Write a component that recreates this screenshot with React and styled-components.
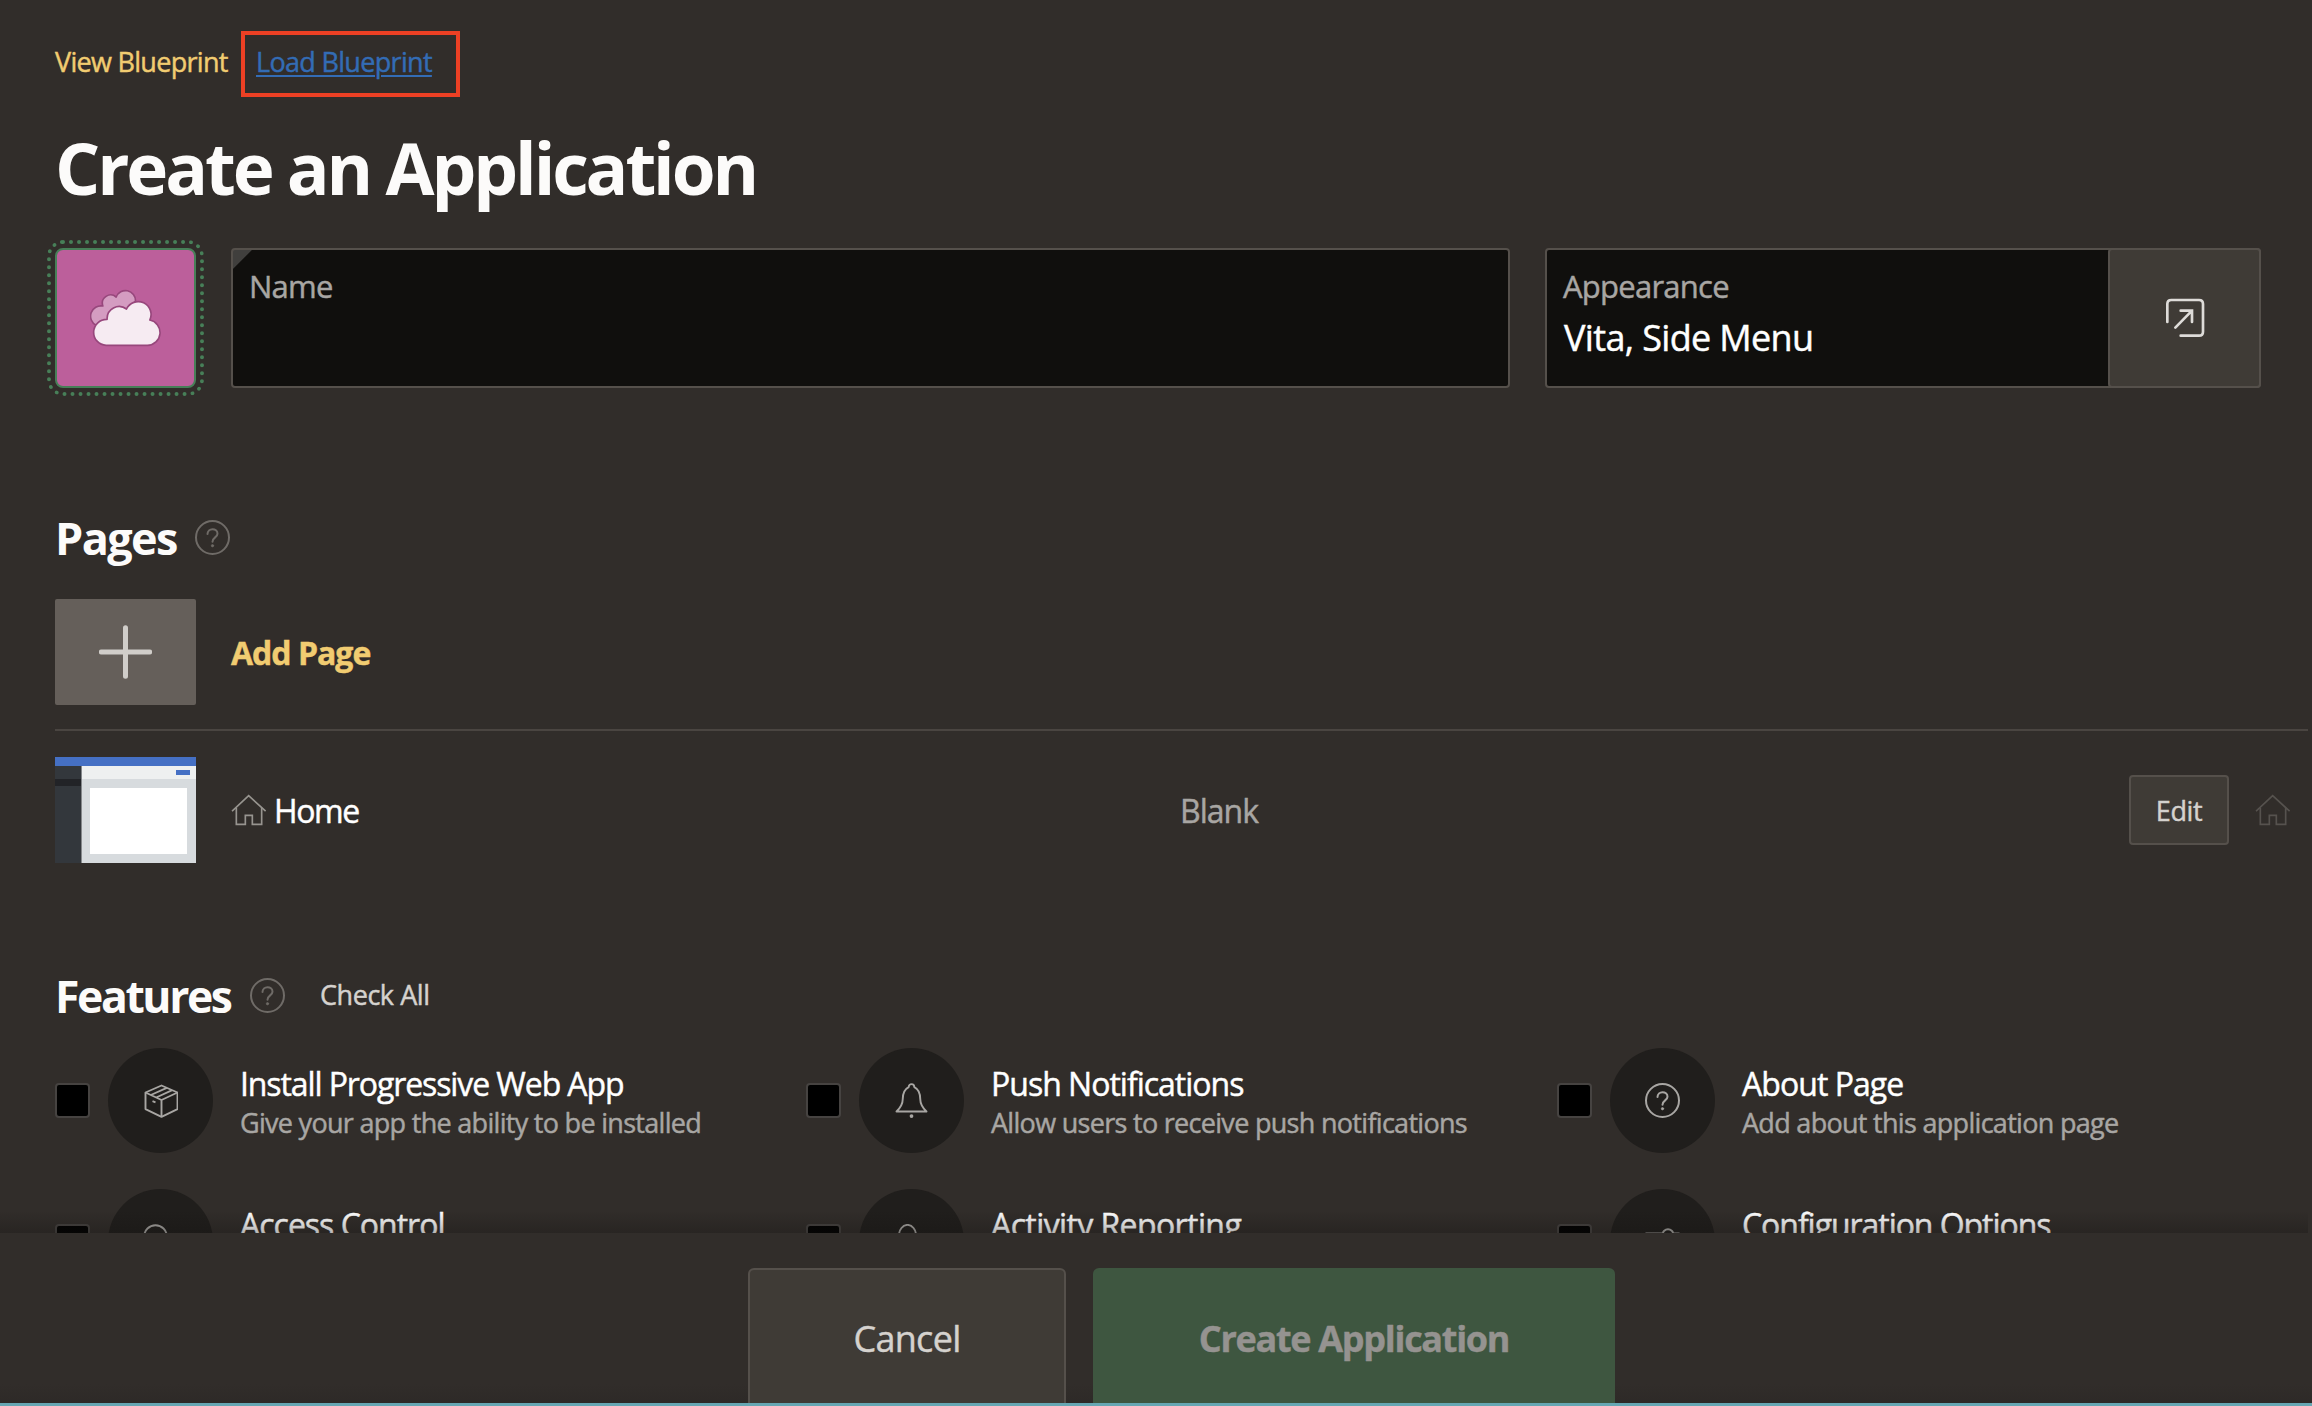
import React from 'react';
import styled, { createGlobalStyle } from 'styled-components';

const GlobalStyle = createGlobalStyle`
  *, *::before, *::after { box-sizing: border-box; }
  body {
    margin: 0;
    background: #312d2a;
    color: #fcfbfa;
    font-family: "Open Sans", "Noto Sans", sans-serif;
    font-size: 27px;
    -webkit-text-stroke: 0.45px currentColor;
  }
  h1, h2, p { margin: 0; }
  button { font-family: inherit; -webkit-text-stroke: inherit; }
`;

const Page = styled.div`
  display: flex;
  flex-direction: column;
  width: 2312px;
  height: 1406px;
  overflow: hidden;
  border-bottom: 3px solid #66a7b3;
`;

const Main = styled.main`
  position: relative;
  height: 1233px;
  flex: none;
  overflow: hidden;
  padding: 31px 4px 0 55px;
  &::after {
    content: "";
    position: absolute;
    left: 0;
    right: 4px;
    bottom: 0;
    height: 22px;
    background: linear-gradient(to bottom, rgba(20, 18, 16, 0), rgba(20, 18, 16, 0.3));
  }
`;

const TopLinks = styled.nav`
  display: flex;
  gap: 12px;
  height: 66px;
`;

const ViewLink = styled.a`
  width: 174px;
  padding-top: 13px;
  line-height: 36px;
  font-size: 27px;
  letter-spacing: -0.7px;
  color: #f1cc71;
  white-space: nowrap;
`;

const Highlight = styled.div`
  width: 219px;
  padding: 8px 0 0 11px;
  border: 4px solid #ed4024;
`;

const LoadLink = styled.a`
  display: inline-block;
  line-height: 36px;
  font-size: 27px;
  letter-spacing: -0.68px;
  color: #336cb5;
  text-decoration: underline;
  text-decoration-thickness: 2px;
  text-underline-offset: 3px;
  white-space: nowrap;
`;

const Title = styled.h1`
  margin-top: 31px;
  line-height: 80px;
  font-size: 71px;
  font-weight: 700;
  letter-spacing: -3.1px;
  -webkit-text-stroke: 0;
`;

const FormRow = styled.div`
  display: grid;
  grid-template-columns: 141px 1279px 716px;
  grid-template-rows: 140px;
  gap: 35px;
  height: 140px;
  margin-top: 40px;
`;

const AppIcon = styled.button`
  display: flex;
  align-items: center;
  justify-content: center;
  padding: 0;
  background: #bc5f9b;
  border: 2px solid #477f58;
  border-radius: 8px;
  outline: 4px dotted #477f58;
  outline-offset: 4px;
`;

const Field = styled.div`
  display: flex;
  justify-content: space-between;
  border: 2px solid #55504b;
  border-radius: 4px;
  background: ${(p) => (p.$required
    ? 'linear-gradient(135deg, #403f3d 13px, #100f0d 13.7px)'
    : '#100f0d')};
`;

const FieldBody = styled.div`
  padding: 14px 0 0 16px;
`;

const FieldLabel = styled.div`
  line-height: 44px;
  font-size: 31px;
  letter-spacing: -0.75px;
  color: #a8a6a3;
`;

const FieldValue = styled.div`
  line-height: 52px;
  margin: 4px 0 0 1px;
  font-size: 36px;
  letter-spacing: -0.65px;
  color: #fff;
`;

const PopupButton = styled.button`
  display: flex;
  align-items: center;
  justify-content: center;
  width: 153px;
  height: 140px;
  margin: -2px;
  padding: 0;
  background: #3f3b36;
  border: 2px solid #55504b;
  border-radius: 4px;
`;

const SectionHead = styled.header`
  display: flex;
  align-items: center;
  height: 60px;
  margin-top: ${(p) => p.$top}px;
`;

const SectionTitle = styled.h2`
  width: ${(p) => p.$w}px;
  padding-top: 2px;
  line-height: 60px;
  font-size: ${(p) => p.$size}px;
  font-weight: 700;
  letter-spacing: ${(p) => p.$ls}px;
  white-space: nowrap;
  -webkit-text-stroke: 0;
`;

const CheckAll = styled.a`
  margin-left: 35px;
  line-height: 36px;
  font-size: 27px;
  letter-spacing: -0.45px;
  color: #d5d2ce;
`;

const AddRow = styled.div`
  display: flex;
  align-items: center;
  gap: 35px;
  height: 132px;
  margin-top: 32px;
  padding-bottom: 24px;
  border-bottom: 2px solid #4a4541;
`;

const AddTile = styled.div`
  display: flex;
  align-items: center;
  justify-content: center;
  width: 141px;
  height: 106px;
  border-radius: 2px;
  background: #655f5a;
`;

const AddLabel = styled.a`
  padding-top: 2px;
  line-height: 44px;
  font-size: 32px;
  font-weight: 700;
  letter-spacing: -1px;
  color: #f1cc71;
`;

const PageRow = styled.div`
  display: grid;
  grid-template-columns: 176px 949px 949px 126px 53px;
  align-items: center;
  height: 106px;
  margin-top: 26px;
`;

const Thumb = styled.div`
  display: grid;
  grid-template-columns: 27px 114px;
  grid-template-rows: 9px 97px;
  width: 141px;
  height: 106px;
`;

const ThumbBar = styled.div`
  grid-column: 1 / 3;
  background: #4570c4;
`;

const ThumbSide = styled.div`
  background: linear-gradient(#33373c 13px, #222327 13px, #222327 20px, #33373c 20px);
  border-right: 1px solid #85888b;
`;

const ThumbBody = styled.div`
  display: flex;
  flex-direction: column;
  background: #d7dbde;
`;

const ThumbHead = styled.div`
  display: flex;
  justify-content: flex-end;
  height: 13px;
  padding: 4px 6px 0 0;
  background: #eef0f0;
  &::after {
    content: "";
    width: 14px;
    height: 5px;
    background: #4570c4;
  }
`;

const ThumbCard = styled.div`
  width: 97px;
  height: 66px;
  margin: 9px 0 0 8px;
  background: #fff;
`;

const PageName = styled.div`
  display: flex;
  align-items: center;
  gap: 7px;
  line-height: 44px;
  font-size: 32px;
  letter-spacing: -1.4px;
  color: #fff;
`;

const PageLabel = styled.span`
  padding-top: 1px;
`;

const PageType = styled.div`
  padding-top: 1px;
  line-height: 44px;
  font-size: 32px;
  letter-spacing: -1px;
  color: #a8a6a3;
`;

const EditButton = styled.button`
  width: 100px;
  height: 70px;
  padding: 0;
  background: #3f3b36;
  border: 2px solid #55504b;
  border-radius: 4px;
  font-size: 27px;
  letter-spacing: -0.4px;
  color: #d5d2ce;
`;

const FeatureGrid = styled.div`
  display: grid;
  grid-template-columns: repeat(3, 751px);
  grid-auto-rows: 105px;
  row-gap: 36px;
  margin-top: 23px;
`;

const Feature = styled.div`
  display: flex;
  align-items: center;
`;

const Checkbox = styled.span`
  width: 35px;
  height: 35px;
  border: 2px solid #464341;
  border-radius: 4px;
  background: #000;
`;

const FeatureIcon = styled.div`
  display: flex;
  align-items: center;
  justify-content: center;
  width: 105px;
  height: 105px;
  margin: 0 27px 0 18px;
  border-radius: 50%;
  background: #201e1c;
`;

const FeatureText = styled.div`
  height: 105px;
  padding-top: 14px;
  white-space: nowrap;
`;

const FeatureName = styled.div`
  line-height: 44px;
  font-size: 32px;
  letter-spacing: ${(p) => p.$ls}px;
  color: #fff;
`;

const FeatureDesc = styled.div`
  margin-top: -1px;
  line-height: 36px;
  font-size: 27px;
  letter-spacing: -0.7px;
  color: #a8a6a3;
`;

const Footer = styled.footer`
  display: flex;
  flex: 1;
  gap: 27px;
  padding: 35px 0 0 748px;
  background: linear-gradient(to top, #2c2826, #312d2a 28px);
`;

const FooterButton = styled.button`
  width: ${(p) => (p.$primary ? 522 : 318)}px;
  height: 144px;
  padding: 0 0 3px;
  border: 2px solid ${(p) => (p.$primary ? '#3e5640' : '#55504b')};
  border-radius: 6px;
  background: ${(p) => (p.$primary ? '#3e5640' : '#3f3b36')};
  color: ${(p) => (p.$primary ? '#959390' : '#d5d2ce')};
  font-size: 36px;
  font-weight: ${(p) => (p.$primary ? 700 : 400)};
  letter-spacing: ${(p) => (p.$primary ? -1.3 : -0.7)}px;
`;

const CloudIcon = () => (
  <svg width="71" height="58" viewBox="150 178 212 174" stroke="#97477c" strokeWidth="5" strokeLinejoin="round">
    <path fill="#d49cc1" d="M168 287A31 31 0 0 1 188 229A25 25 0 0 1 228 202A30 30 0 0 1 286 214L260 260Z" />
    <path fill="#f6ebf2" d="M198 347A39 39 0 0 1 201 269A36 36 0 0 1 259 238A38 38 0 0 1 329 271A38.4 38.4 0 0 1 322 347Z" />
  </svg>
);

const PopupIcon = () => (
  <svg width="40" height="40" viewBox="224 174 120 120" fill="none" stroke="#dedcd9" strokeWidth="8" strokeLinecap="round">
    <path d="M231 246V192Q231 180 243 180H326Q338 180 338 192V275Q338 287 326 287H271" />
    <path d="M255 263L305 212M271 212H305V246" />
  </svg>
);

const HelpIcon = ({ color = '#6f6b67' }) => (
  <svg width="35" height="35" viewBox="0.5 0.5 35 35" fill="none" stroke={color} strokeWidth="2" strokeLinecap="round">
    <circle cx="18" cy="18" r="16.5" />
    <path d="M13 14.5C13 8.2 23 8.2 23 14.2C23 17.8 18 18 18 22.2" />
    <circle cx="18" cy="26.2" r="1.2" fill={color} strokeWidth="0.6" />
  </svg>
);

const PlusIcon = () => (
  <svg width="53" height="54" viewBox="0.5 0 53 54" stroke="#d0cdc9" strokeWidth="5" strokeLinecap="round">
    <path d="M27 2.8V51.2M2.8 27H51.2" />
  </svg>
);

const HomeIcon = ({ color }) => (
  <svg width="36" height="32" viewBox="692 884 108 96" fill="none" stroke={color} strokeWidth="5" strokeLinecap="square">
    <path d="M697 934L745 889L794 934" />
    <path d="M708 928V975H735V948H756V975H784V928" />
  </svg>
);

const iconProps = { width: 35, height: 35, viewBox: '0.5 0.5 35 35', fill: 'none', stroke: '#a8a6a3', strokeWidth: 1.9, strokeLinejoin: 'round' };

const PackageIcon = () => (
  <svg {...iconProps}>
    <path d="M19 3L35 10V26.6L19 34.4L3 26.6V10Z" />
    <path d="M3 10L19 17.5L35 10M19 17.5V34.4M8.3 12.5L24.3 5.3M13.7 15L29.7 7.7M10 18.6L13 19.8" />
  </svg>
);

const BellIcon = () => (
  <svg {...iconProps}>
    <path d="M15.2 4.6C15.2 0.6 20.8 0.6 20.8 4.6C25.8 7 26.8 11 26.8 17C26.8 23 30 26 33 29H3C6 26 9.2 23 9.2 17C9.2 11 10.2 7 15.2 4.6Z" />
    <circle cx="18" cy="33.6" r="1.9" fill="#a8a6a3" stroke="none" />
  </svg>
);

const AccessIcon = () => (
  <svg {...iconProps}>
    <circle cx="13" cy="13" r="11.3" />
    <path d="M21 21L34 34" />
  </svg>
);

const ActivityIcon = () => (
  <svg {...iconProps}>
    <ellipse cx="14" cy="12" rx="8.5" ry="10.6" />
    <path d="M2 34C2 26 8 24 14 24C20 24 26 26 26 34" />
  </svg>
);

const SlidersIcon = () => (
  <svg {...iconProps}>
    <path d="M1 10H18M29 10H35" />
    <circle cx="23.5" cy="11" r="5.3" />
    <path d="M1 25H7M18 25H35" />
    <circle cx="12" cy="25" r="5" />
  </svg>
);

const features = [
  { name: 'Install Progressive Web App', ls: -1.1, desc: 'Give your app the ability to be installed', icon: <PackageIcon /> },
  { name: 'Push Notifications', ls: -1, desc: 'Allow users to receive push notifications', icon: <BellIcon /> },
  { name: 'About Page', ls: -0.95, desc: 'Add about this application page', icon: <HelpIcon color="#a8a6a3" /> },
  { name: 'Access Control', ls: -1, icon: <AccessIcon /> },
  { name: 'Activity Reporting', ls: -0.6, icon: <ActivityIcon /> },
  { name: 'Configuration Options', ls: -1.05, icon: <SlidersIcon /> },
];

export default function App() {
  return (
    <>
      <GlobalStyle />
      <Page>
        <Main>
          <TopLinks>
            <ViewLink>View Blueprint</ViewLink>
            <Highlight><LoadLink>Load Blueprint</LoadLink></Highlight>
          </TopLinks>
          <Title>Create an Application</Title>
          <FormRow>
            <AppIcon><CloudIcon /></AppIcon>
            <Field $required>
              <FieldBody><FieldLabel>Name</FieldLabel></FieldBody>
            </Field>
            <Field>
              <FieldBody>
                <FieldLabel>Appearance</FieldLabel>
                <FieldValue>Vita, Side Menu</FieldValue>
              </FieldBody>
              <PopupButton><PopupIcon /></PopupButton>
            </Field>
          </FormRow>

          <SectionHead $top={119}>
            <SectionTitle $w={140} $size={45} $ls={-1.6}>Pages</SectionTitle>
            <HelpIcon />
          </SectionHead>
          <AddRow>
            <AddTile><PlusIcon /></AddTile>
            <AddLabel>Add Page</AddLabel>
          </AddRow>
          <PageRow>
            <Thumb>
              <ThumbBar />
              <ThumbSide />
              <ThumbBody><ThumbHead /><ThumbCard /></ThumbBody>
            </Thumb>
            <PageName><HomeIcon color="#97948f" /><PageLabel>Home</PageLabel></PageName>
            <PageType>Blank</PageType>
            <EditButton>Edit</EditButton>
            <HomeIcon color="#56524e" />
          </PageRow>

          <SectionHead $top={102}>
            <SectionTitle $w={195} $size={44.5} $ls={-2.4}>Features</SectionTitle>
            <HelpIcon />
            <CheckAll>Check All</CheckAll>
          </SectionHead>
          <FeatureGrid>
            {features.map((f) => (
              <Feature key={f.name}>
                <Checkbox />
                <FeatureIcon>{f.icon}</FeatureIcon>
                <FeatureText>
                  <FeatureName $ls={f.ls}>{f.name}</FeatureName>
                  {f.desc && <FeatureDesc>{f.desc}</FeatureDesc>}
                </FeatureText>
              </Feature>
            ))}
          </FeatureGrid>
        </Main>
        <Footer>
          <FooterButton>Cancel</FooterButton>
          <FooterButton $primary>Create Application</FooterButton>
        </Footer>
      </Page>
    </>
  );
}
